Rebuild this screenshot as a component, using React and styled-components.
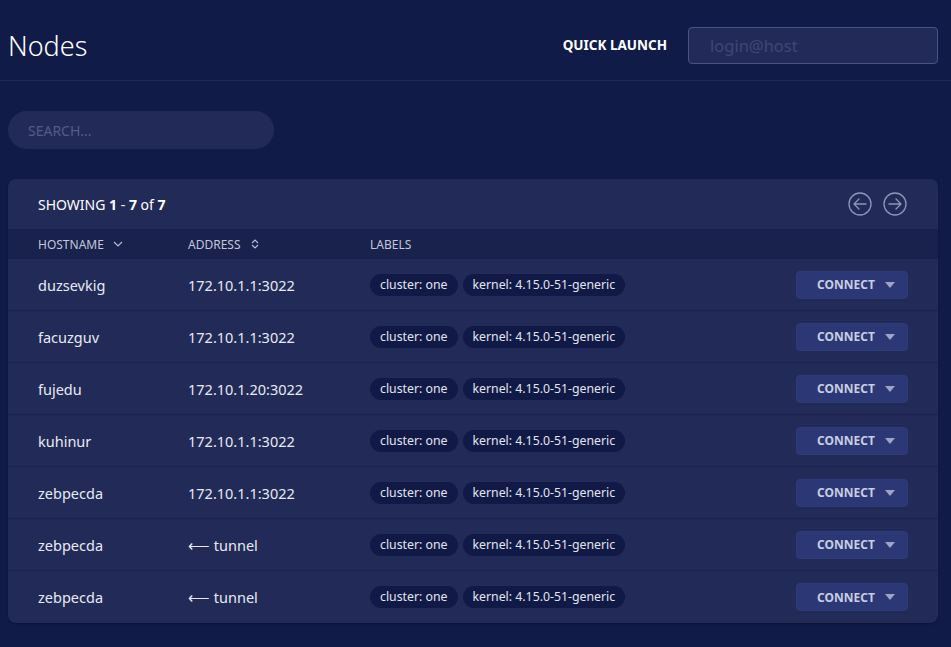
import styled, { createGlobalStyle } from "styled-components";

const GlobalStyle = createGlobalStyle`
  body {
    margin: 0;
    background: #111b48;
    font-family: "Noto Sans", "Open Sans", sans-serif;
    color: #e8eaf3;
  }
`;

const nodes = [
  { host: "duzsevkig", addr: "172.10.1.1:3022" },
  { host: "facuzguv", addr: "172.10.1.1:3022" },
  { host: "fujedu", addr: "172.10.1.20:3022" },
  { host: "kuhinur", addr: "172.10.1.1:3022" },
  { host: "zebpecda", addr: "172.10.1.1:3022" },
  { host: "zebpecda", addr: "⟵ tunnel" },
  { host: "zebpecda", addr: "⟵ tunnel" },
];

const labels = ["cluster: one", "kernel: 4.15.0-51-generic"];

const CircleArrow = ({ dir }) => (
  <svg width="24" height="24" viewBox="0 0 24 24" fill="none" stroke="#8f95b8" strokeWidth="1.3" strokeLinecap="round" strokeLinejoin="round">
    <circle cx="12" cy="12" r="11" />
    {dir === "left" ? (
      <path d="M18 12H6M11 7l-5 5 5 5" />
    ) : (
      <path d="M6 12h12M13 7l5 5-5 5" />
    )}
  </svg>
);

export default function App() {
  return (
    <Page>
      <GlobalStyle />
      <TopBar>
        <Title>Nodes</Title>
        <QuickLaunch>
          <QuickLabel>Quick Launch</QuickLabel>
          <QuickInput placeholder="login@host" />
        </QuickLaunch>
      </TopBar>
      <SearchInput placeholder="SEARCH..." />
      <Card>
        <CardHeader>
          <Showing>
            SHOWING <b>1</b> - <b>7</b> of <b>7</b>
          </Showing>
          <Pager>
            <PagerBtn><CircleArrow dir="left" /></PagerBtn>
            <PagerBtn><CircleArrow dir="right" /></PagerBtn>
          </Pager>
        </CardHeader>
        <HeadRow>
          <HeadCell>
            Hostname
            <svg width="12" height="12" viewBox="0 0 12 12" fill="none" stroke="#b9bdd3" strokeWidth="1.1">
              <path d="M2 4l4 4 4-4" />
            </svg>
          </HeadCell>
          <HeadCell>
            Address
            <svg width="12" height="12" viewBox="0 0 12 12" fill="none" stroke="#b9bdd3" strokeWidth="1.1">
              <path d="M3 5l3-3 3 3M3 7l3 3 3-3" />
            </svg>
          </HeadCell>
          <HeadCell>Labels</HeadCell>
          <HeadCell />
        </HeadRow>
        {nodes.map((n, i) => (
          <Row key={i} $last={i === nodes.length - 1}>
            <Cell>{n.host}</Cell>
            <Cell>{n.addr}</Cell>
            <Labels>
              {labels.map((l) => (
                <Pill key={l}>{l}</Pill>
              ))}
            </Labels>
            <ConnectBtn>
              Connect
              <Caret />
            </ConnectBtn>
          </Row>
        ))}
      </Card>
    </Page>
  );
}

const Page = styled.div`
  min-height: 647px;
  padding: 0 13px 0 8px;
  box-sizing: border-box;
`;

const TopBar = styled.div`
  display: flex;
  align-items: center;
  justify-content: space-between;
  height: 81px;
  box-sizing: border-box;
  margin: 0 -13px 0 -8px;
  padding: 10px 13px 0 8px;
  border-bottom: 1px solid #1e2855;
`;

const Title = styled.h1`
  margin: 0;
  font-size: 27px;
  font-weight: 300;
  color: #ffffff;
`;

const QuickLaunch = styled.div`
  display: flex;
  align-items: center;
  gap: 21px;
`;

const QuickLabel = styled.span`
  font-size: 13.5px;
  font-weight: 700;
  text-transform: uppercase;
  color: #ffffff;
`;

const QuickInput = styled.input`
  width: 250px;
  height: 37px;
  box-sizing: border-box;
  background: #222b58;
  border: 1px solid #4a5383;
  border-radius: 4px;
  padding: 0 21px;
  font-family: inherit;
  font-size: 16.5px;
  color: #e8eaf3;
  outline: none;
  &::placeholder {
    color: #3e4774;
  }
`;

const SearchInput = styled.input`
  display: block;
  margin-top: 30px;
  width: 266px;
  height: 38px;
  box-sizing: border-box;
  background: #222b58;
  border: none;
  border-radius: 19px;
  padding: 0 20px;
  font-family: inherit;
  font-size: 14px;
  color: #e8eaf3;
  outline: none;
  &::placeholder {
    color: #535c87;
  }
`;

const Card = styled.div`
  margin-top: 30px;
  background: #222b58;
  border-radius: 8px;
  overflow: hidden;
  box-shadow: 0 1px 2px rgba(0, 0, 0, 0.25);
`;

const CardHeader = styled.div`
  display: flex;
  align-items: center;
  justify-content: space-between;
  height: 50px;
  padding: 0 30px;
`;

const Showing = styled.div`
  font-size: 14px;
  color: #ffffff;
  b {
    font-weight: 700;
  }
`;

const Pager = styled.div`
  display: flex;
  gap: 11px;
  margin-right: 1px;
`;

const PagerBtn = styled.button`
  display: flex;
  background: none;
  border: none;
  padding: 0;
  cursor: pointer;
`;

const grid = `
  display: grid;
  grid-template-columns: 150px 182px 1fr auto;
  align-items: center;
  padding: 0 30px;
`;

const HeadRow = styled.div`
  ${grid}
  height: 30px;
  background: #19214d;
`;

const HeadCell = styled.div`
  display: flex;
  align-items: center;
  gap: 8px;
  font-size: 12px;
  text-transform: uppercase;
  color: #c3c7da;
`;

const Row = styled.div`
  ${grid}
  height: 52px;
  box-sizing: border-box;
  border-bottom: ${(p) => (p.$last ? "none" : "1px solid #1a2250")};
`;

const Cell = styled.div`
  font-size: 14.5px;
  color: #e8eaf3;
`;

const Labels = styled.div`
  display: flex;
  gap: 5px;
`;

const Pill = styled.span`
  background: #111a46;
  border-radius: 11px;
  padding: 2px 10px;
  font-size: 12.3px;
  line-height: 18px;
  color: #e3e5ef;
`;

const ConnectBtn = styled.button`
  display: flex;
  align-items: center;
  justify-content: center;
  gap: 10px;
  width: 112px;
  height: 28px;
  background: #2c3875;
  border: 1px solid #2f3a78;
  border-radius: 4px;
  font-family: inherit;
  font-size: 12px;
  font-weight: 700;
  text-transform: uppercase;
  color: #c9cde0;
  padding: 0 0 0 8px;
  cursor: pointer;
`;

const Caret = styled.span`
  width: 0;
  height: 0;
  border-left: 5px solid transparent;
  border-right: 5px solid transparent;
  border-top: 6px solid #9ea4c5;
`;
